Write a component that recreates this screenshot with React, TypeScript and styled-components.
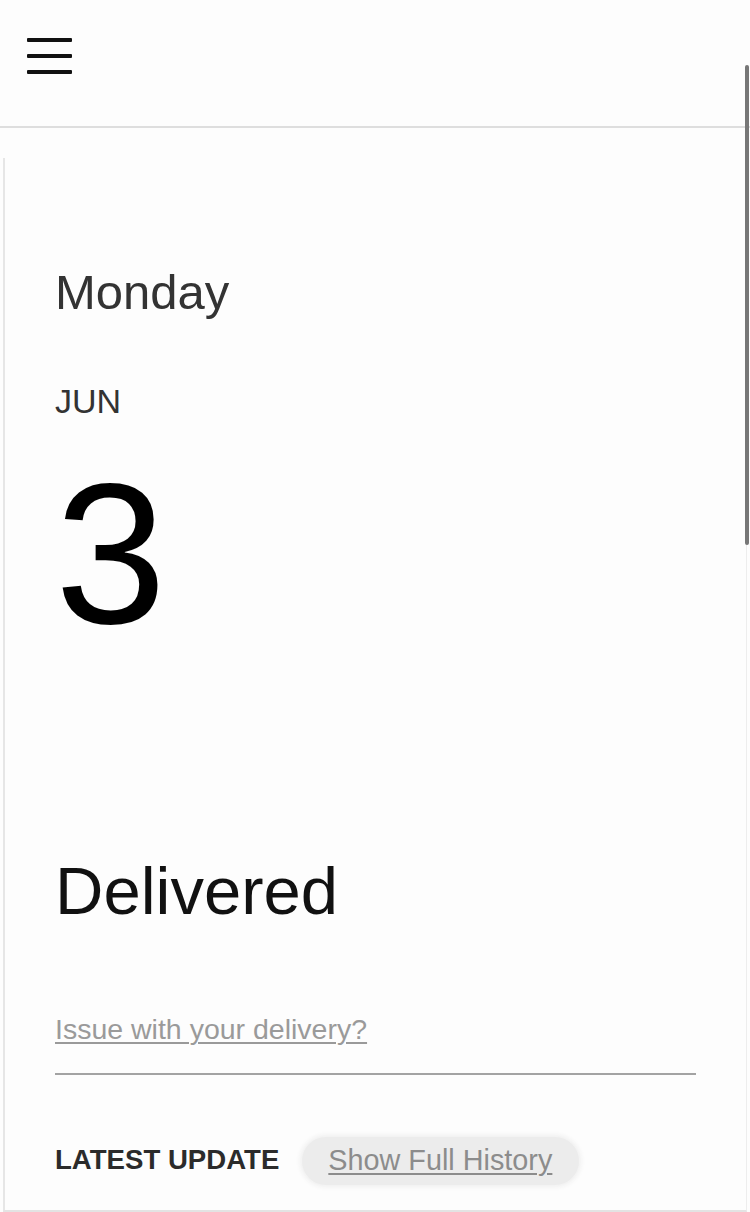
import * as React from "react"
import styled, { createGlobalStyle } from "styled-components"

const GlobalStyle = createGlobalStyle`
  html, body {
    margin: 0;
    padding: 0;
    height: 1212px;
    overflow: hidden;
    background: #fdfdfd;
    font-family: "Liberation Sans", Arial, Helvetica, sans-serif;
  }
`

const Page = styled.div`
  position: relative;
  height: 1212px;
  display: flex;
  flex-direction: column;
`

const Header = styled.header`
  height: 128px;
  border-bottom: 2px solid #dedede;
  display: flex;
  align-items: flex-start;
  padding: 38px 0 0 27px;
  box-sizing: border-box;
`

const Burger = styled.button`
  width: 45px;
  height: 36px;
  padding: 0;
  border: 0;
  background: transparent;
  display: flex;
  flex-direction: column;
  justify-content: space-between;
  cursor: pointer;
`

const BurgerLine = styled.span`
  display: block;
  height: 4px;
  width: 45px;
  background: #111;
  border-radius: 1px;
`

const Card = styled.main`
  margin: 30px 3px 0 3px;
  border-left: 2px solid #e6e6e6;
  border-right: 1px solid #ededed;
  border-bottom: 2px solid #e3e3e3;
  padding: 110px 50px 25px 50px;
  display: flex;
  flex-direction: column;
  align-items: flex-start;
`

const DayName = styled.div`
  font-size: 49px;
  line-height: 1;
  color: #333;
`

const Month = styled.div`
  margin-top: 67px;
  font-size: 34px;
  line-height: 1;
  color: #333;
`

const DayNumber = styled.div`
  margin-top: 36px;
  font-size: 200px;
  line-height: 1;
  color: #000;
`

const Status = styled.h1`
  margin: 203px 0 0 0;
  font-size: 67px;
  font-weight: 400;
  line-height: 1;
  color: #111;
`

const IssueLink = styled.a`
  margin-top: 91px;
  font-size: 28.5px;
  line-height: 1;
  color: #9a9a9a;
  text-decoration: underline;
  text-underline-offset: 3px;
  text-decoration-thickness: 2px;
  cursor: pointer;
`

const Divider = styled.hr`
  align-self: stretch;
  margin: 29px 0 0 0;
  border: 0;
  height: 2px;
  background: #a3a3a3;
`

const UpdateRow = styled.div`
  margin-top: 62px;
  display: flex;
  align-items: center;
  gap: 23px;
  height: 48px;
`

const UpdateLabel = styled.span`
  font-size: 27.6px;
  font-weight: 700;
  line-height: 1;
  color: #2b2b2b;
  margin-top: -2px;
`

const HistoryButton = styled.button`
  height: 48px;
  padding: 0 27px 0 26px;
  border: 0;
  border-radius: 24px;
  background: #ececec;
  box-shadow: 0 0 5px 2px #efefef;
  font-family: inherit;
  font-size: 28.8px;
  line-height: 1;
  color: #8c8c8c;
  text-decoration: underline;
  text-underline-offset: 3px;
  text-decoration-thickness: 2px;
  cursor: pointer;
`

const ScrollThumb = styled.div`
  position: absolute;
  top: 65px;
  right: 1px;
  width: 4px;
  height: 480px;
  border-radius: 2px;
  background: #777;
`

export default function App() {
  return (
    <>
      <GlobalStyle />
      <Page>
        <Header>
          <Burger aria-label="Menu">
            <BurgerLine />
            <BurgerLine />
            <BurgerLine />
          </Burger>
        </Header>
        <Card>
          <DayName>Monday</DayName>
          <Month>JUN</Month>
          <DayNumber>3</DayNumber>
          <Status>Delivered</Status>
          <IssueLink>Issue with your delivery?</IssueLink>
          <Divider />
          <UpdateRow>
            <UpdateLabel>LATEST UPDATE</UpdateLabel>
            <HistoryButton>Show Full History</HistoryButton>
          </UpdateRow>
        </Card>
        <ScrollThumb />
      </Page>
    </>
  )
}
